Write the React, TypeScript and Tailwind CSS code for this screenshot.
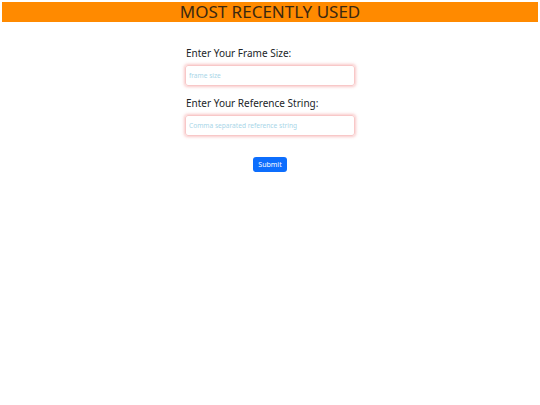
export default function App() {
  return (
    <div className="min-h-screen bg-white font-['Noto_Sans',sans-serif]">
      <div className="mx-[2px] pt-[2px]">
        <h1 className="h-[20px] bg-[#ff8a00] text-center text-[17px] leading-[20px] text-[#3b2810]">
          MOST RECENTLY USED
        </h1>
      </div>

      <form className="mx-auto mt-[24px] flex w-[170px] flex-col">
        <label className="ml-[1px] text-[10px] leading-[14px] text-[#212529]">Enter Your Frame Size:</label>
        <input
          type="text"
          placeholder="frame size"
          className="mt-[5px] h-[21px] rounded-[3px] border border-[#f8c8c8] px-[3px] text-[6.6px] shadow-[0_0_3px_1px_rgba(240,130,130,0.45)] outline-none placeholder:text-[#a9d6e8]"
        />

        <label className="ml-[1px] mt-[10px] text-[10px] leading-[14px] text-[#212529]">Enter Your Reference String:</label>
        <input
          type="text"
          placeholder="Comma separated reference string"
          className="mt-[5px] h-[21px] rounded-[3px] border border-[#f8c8c8] px-[3px] text-[6.6px] shadow-[0_0_3px_1px_rgba(240,130,130,0.45)] outline-none placeholder:text-[#a9d6e8]"
        />

        <button
          type="button"
          className="mx-auto mt-[21px] h-[15px] w-[34px] rounded-[3px] bg-[#0d6efd] text-[7px] leading-[15px] text-white"
        >
          Submit
        </button>
      </form>
    </div>
  )
}
